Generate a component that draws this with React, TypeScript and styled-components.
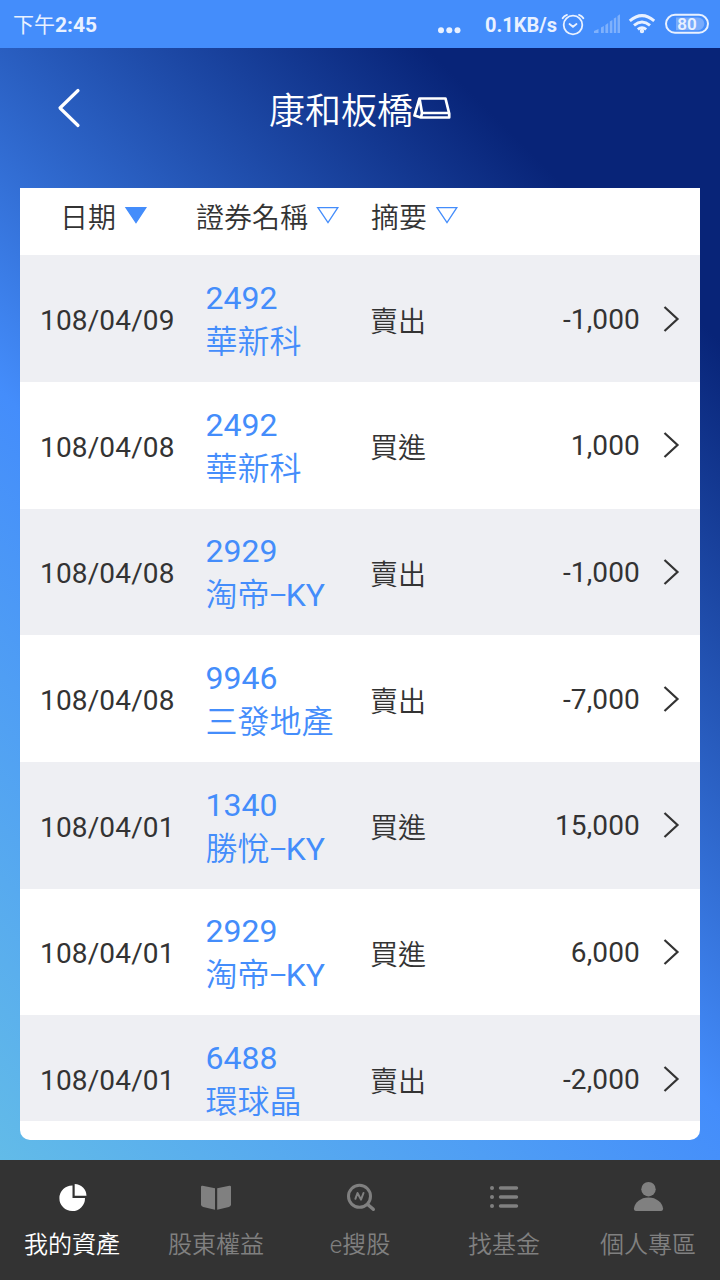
import React from 'react';
import styled, { createGlobalStyle } from 'styled-components';

const Global = createGlobalStyle`
  * { box-sizing: border-box; }
  body {
    margin: 0;
    font-family: Roboto, 'Noto Sans CJK TC', sans-serif;
    color: #333;
  }
`;

const Screen = styled.div`
  width: 720px;
  height: 1280px;
  display: flex;
  flex-direction: column;
  overflow: hidden;
`;

const StatusBar = styled.header`
  height: 48px;
  flex: none;
  display: flex;
  align-items: center;
  padding: 0 11px 0 13px;
  background: #448dfb;
  color: #e9f1ff;
  font-size: 21px;
  line-height: 48px;
  font-weight: 700;
`;

const Clock = styled.span`
  flex: 1;
  padding-top: 1px;
`;

const ClockPeriod = styled.span`
  font-weight: 400;
`;

const Speed = styled.span`
  font-size: 20px;
  margin-left: 24px;
  padding-top: 1px;
`;

const StatusIcon = styled.svg<{ $gap: number }>`
  flex: none;
  margin-left: ${(p) => p.$gap}px;
`;

const Body = styled.main`
  flex: 1;
  min-height: 0;
  display: flex;
  flex-direction: column;
  padding: 0 20px 20px;
  background: linear-gradient(45deg, #62bbe8 0%, #448dfb 42%, #082478 84%);
`;

const TitleBar = styled.div`
  height: 140px;
  flex: none;
  display: grid;
  grid-template-columns: 100px 1fr 100px;
  align-items: center;
  padding-bottom: 20px;
`;

const BackButton = styled.button`
  display: flex;
  border: 0;
  padding: 0 0 0 36px;
  background: none;
`;

const Title = styled.h1`
  display: flex;
  justify-content: center;
  align-items: center;
  margin: 0;
  color: #fff;
  font-size: 36px;
  line-height: 48px;
  font-weight: 350;
`;

const TitleText = styled.span`
  padding-top: 7px;
`;

const Card = styled.section`
  flex: 1;
  min-height: 0;
  display: flex;
  flex-direction: column;
  padding-bottom: 19.4px;
  background: #fff;
  border-radius: 0 0 10px 10px;
`;

const columns = '176px 175px 100px 1fr 60px';

const TableHead = styled.div`
  height: 67.2px;
  flex: none;
  display: grid;
  grid-template-columns: ${columns};
  font-size: 28px;
  line-height: 56px;
  font-weight: 350;
`;

const HeadCell = styled.div<{ $indent: number }>`
  display: flex;
  align-items: center;
  height: 56px;
  gap: 7.5px;
  white-space: nowrap;
  padding-left: ${(p) => p.$indent}px;
`;

const HeadLabel = styled.span`
  padding-top: 5px;
`;

const Rows = styled.div`
  flex: 1;
  min-height: 0;
  overflow: hidden;
`;

const Row = styled.div<{ $shaded: boolean }>`
  height: 126.7px;
  display: grid;
  grid-template-columns: ${columns};
  align-items: center;
  background: ${(p) => (p.$shaded ? '#eeeff3' : '#fff')};
  font-size: 28px;
  line-height: 40px;
`;

const DateCell = styled.div`
  padding-left: 20px;
  padding-top: 5px;
  letter-spacing: 0.15px;
`;

const StockCell = styled.div`
  padding-left: 9.5px;
  padding-top: 3px;
  color: #448dfb;
  font-size: 32px;
  line-height: 44px;
  white-space: nowrap;
`;

const StockName = styled.div`
  height: 44px;
  font-weight: 350;
`;

const Suffix = styled.span`
  line-height: 0;
  font-weight: 400;
`;

const Dash = styled.span`
  font-family: 'Noto Sans CJK TC', sans-serif;
  font-weight: 400;
  line-height: 0;
  vertical-align: 2px;
  margin-right: -1px;
`;

const ActionCell = styled.div`
  font-weight: 350;
  padding-top: 8px;
  margin-left: -1px;
`;

const AmountCell = styled.div`
  text-align: right;
  padding-top: 2px;
  letter-spacing: 0.15px;
`;

const ArrowCell = styled.div`
  display: flex;
  justify-content: flex-end;
  padding-right: 20px;
`;

const TabBar = styled.nav`
  height: 120px;
  flex: none;
  display: grid;
  grid-template-columns: repeat(5, 1fr);
  background: #333;
`;

const Tab = styled.div<{ $active: boolean }>`
  display: flex;
  flex-direction: column;
  align-items: center;
  padding-top: 20px;
  color: ${(p) => (p.$active ? '#fff' : '#808080')};
  font-size: 24px;
  line-height: 32px;
  font-weight: 350;
`;

const TabIcon = styled.svg`
  margin: 0 0 15px 2px;
`;

type Entry = { date: string; code: string; name: string; suffix?: string; action: string; amount: string };

const entries: Entry[] = [
  { date: '108/04/09', code: '2492', name: '華新科', action: '賣出', amount: '-1,000' },
  { date: '108/04/08', code: '2492', name: '華新科', action: '買進', amount: '1,000' },
  { date: '108/04/08', code: '2929', name: '淘帝', suffix: 'KY', action: '賣出', amount: '-1,000' },
  { date: '108/04/08', code: '9946', name: '三發地產', action: '賣出', amount: '-7,000' },
  { date: '108/04/01', code: '1340', name: '勝悅', suffix: 'KY', action: '買進', amount: '15,000' },
  { date: '108/04/01', code: '2929', name: '淘帝', suffix: 'KY', action: '買進', amount: '6,000' },
  { date: '108/04/01', code: '6488', name: '環球晶', action: '賣出', amount: '-2,000' },
];

const SortMark = ({ filled = false }: { filled?: boolean }) => (
  <svg width="24" height="20" viewBox="0 0 24 20">
    <path d="M2 1.7H21.8L12 16.5Z" fill={filled ? '#448dfb' : 'none'} stroke="#448dfb" strokeWidth="1.3" />
  </svg>
);

const tabs = [
  {
    label: '我的資產',
    icon: (
      <g fill="currentColor">
        <path d="M16.5 5.5V18H29A12.8 12.8 0 1 1 16.5 5.5Z" />
        <path d="M18.7 4A12 12 0 0 1 30.5 15.8H18.7Z" />
      </g>
    ),
  },
  {
    label: '股東權益',
    icon: (
      <g fill="currentColor">
        <path d="M2.6 5.8 15 8.3V29.7L3.2 27Q1 26.4 1 24.8V7Q1 5.5 2.6 5.8Z" />
        <path d="M29.4 5.8 17.2 8.3V29.7L28.8 27Q31 26.4 31 24.8V7Q31 5.5 29.4 5.8Z" />
      </g>
    ),
  },
  {
    label: 'e搜股',
    icon: (
      <g fill="none" stroke="currentColor" strokeLinecap="round" strokeLinejoin="round">
        <circle cx="15.5" cy="16.3" r="11" strokeWidth="3" />
        <path d="M24 24.8 29.3 29.3" strokeWidth="3.4" />
        <path d="M11.4 18.8 13.5 13 17 19.6 19.5 13" strokeWidth="2" />
      </g>
    ),
  },
  {
    label: '找基金',
    icon: (
      <g fill="none" stroke="currentColor" strokeLinecap="round">
        <path d="M4 8h.01M4 17h.01M4 26h.01" strokeWidth="4" />
        <path d="M12.5 8H28.5M12.5 17H28.5M12.5 26H28.5" strokeWidth="3.4" />
      </g>
    ),
  },
  {
    label: '個人專區',
    icon: (
      <g fill="currentColor">
        <circle cx="16.5" cy="9.2" r="7.2" />
        <path d="M16.5 17.6C24.5 17.6 30 22.6 31 28.3Q31.2 31 29 31H4Q1.8 31 2 28.3C3 22.6 8.5 17.6 16.5 17.6Z" />
      </g>
    ),
  },
];

export default function App() {
  return (
    <Screen>
      <Global />
      <StatusBar>
        <Clock>
          <ClockPeriod>下午</ClockPeriod>2:45
        </Clock>
        <StatusIcon $gap={0} width="24" height="48" fill="currentColor">
          <circle cx="4" cy="30.3" r="3" />
          <circle cx="12.3" cy="30.3" r="3" />
          <circle cx="20.5" cy="30.3" r="3" />
        </StatusIcon>
        <Speed>0.1KB/s</Speed>
        <StatusIcon $gap={4} width="24" height="48" fill="none" stroke="currentColor" strokeWidth="1.8" strokeLinecap="round">
          <circle cx="12" cy="25" r="9.3" />
          <path d="M8.5 24 12 26.8 15.5 24M1.6 18.3Q3 15.7 6 14.8M22.4 18.3Q21 15.7 18 14.8" />
        </StatusIcon>
        <StatusIcon $gap={8} width="28" height="48" fill="#7fb1fc">
          <path d="M1 33V31L5.5 29V33ZM8 27.5 10.8 26V33H8ZM12.4 25 15.2 23V33H12.4ZM16.8 21.5 19.4 20V33H16.8ZM20.8 18.5 23.2 17.2V33H20.8ZM24.5 16 27 14.3V33H24.5Z" />
        </StatusIcon>
        <StatusIcon $gap={7} width="28" height="48" fill="none" stroke="currentColor" strokeWidth="3">
          <path d="M1.8 20.8Q14 10.5 26.2 20.8M6 25.3Q14 18.7 22 25.3M9.8 29.4Q14 26.2 18.2 29.4" />
          <circle cx="14" cy="31" r="1.2" strokeWidth="2" />
        </StatusIcon>
        <StatusIcon $gap={9} width="44" height="48">
          <rect x="1" y="14.8" width="42" height="18" rx="9" fill="none" stroke="#e9f1ff" strokeWidth="2" />
          <path d="M11 17.5H33A6.3 6.3 0 0 1 33 30.2H11Z" fill="#78abfc" />
          <text x="22" y="29.9" textAnchor="middle" fontSize="17" fontWeight="600" fill="#e9f1ff">80</text>
        </StatusIcon>
      </StatusBar>
      <Body>
        <TitleBar>
          <BackButton>
            <svg width="26" height="42" viewBox="0 0 26 42" fill="none" stroke="#fff" strokeWidth="3.2" strokeLinecap="round" strokeLinejoin="round">
              <path d="M22 3.5 4 21 22 38.5" />
            </svg>
          </BackButton>
          <Title>
            <TitleText>康和板橋</TitleText>
            <svg width="38" height="26" viewBox="0 0 38 26" fill="none" stroke="#fff" strokeWidth="2.7" strokeLinejoin="round">
              <path d="M6.5 3.5H32.5L36.2 18.5V22.5H8L1.5 20.5Z" />
              <path d="M6.5 3.5 9 18H36.2M9 18 8 22.5" />
            </svg>
          </Title>
        </TitleBar>
        <Card>
          <TableHead>
            <HeadCell $indent={40}><HeadLabel>日期</HeadLabel><SortMark filled /></HeadCell>
            <HeadCell $indent={0}><HeadLabel>證券名稱</HeadLabel><SortMark /></HeadCell>
            <HeadCell $indent={0}><HeadLabel>摘要</HeadLabel><SortMark /></HeadCell>
          </TableHead>
          <Rows>
            {entries.map((e, i) => (
              <Row key={i} $shaded={i % 2 === 0}>
                <DateCell>{e.date}</DateCell>
                <StockCell>
                  <div>{e.code}</div>
                  <StockName>
                    {e.name}
                    {e.suffix && <Suffix><Dash>–</Dash>{e.suffix}</Suffix>}
                  </StockName>
                </StockCell>
                <ActionCell>{e.action}</ActionCell>
                <AmountCell>{e.amount}</AmountCell>
                <ArrowCell>
                  <svg width="18" height="28" viewBox="0 0 18 28" fill="none" stroke="#333" strokeWidth="2.2">
                    <path d="M2.5 2 15.5 14 2.5 26" />
                  </svg>
                </ArrowCell>
              </Row>
            ))}
          </Rows>
        </Card>
      </Body>
      <TabBar>
        {tabs.map((t, i) => (
          <Tab key={t.label} $active={i === 0}>
            <TabIcon width="34" height="34" viewBox="0 0 34 34">{t.icon}</TabIcon>
            {t.label}
          </Tab>
        ))}
      </TabBar>
    </Screen>
  );
}
